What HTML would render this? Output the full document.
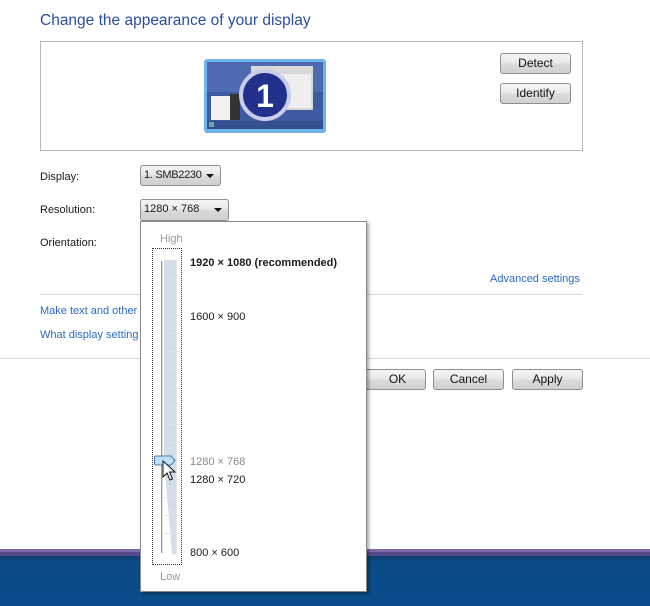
<!DOCTYPE html>
<html><head><style>
*{margin:0;padding:0;box-sizing:border-box}
body{width:650px;height:606px;overflow:hidden;background:#fff;font-family:"Liberation Sans",sans-serif;font-size:11px;color:#1a1a1a;position:relative}
.a{position:absolute;white-space:nowrap}
.lnk{color:#2a6bc4}
.btn{position:absolute;border:1px solid #8e8f8f;border-radius:3px;background:linear-gradient(#f6f6f6,#e8e8e8 50%,#dcdcdc 51%,#d0d0d0);text-align:center;font-size:12px;line-height:19px;color:#111}
.dd{position:absolute;border:1px solid #8e8f8f;border-radius:3px;background:linear-gradient(#f6f6f6,#e6e6e6 50%,#dadada 51%,#cfcfcf);font-size:11px;line-height:19px;padding-left:3px}
.dd:after{content:"";position:absolute;right:6px;top:8px;border:4px solid transparent;border-top:4px solid #111;border-bottom:0}
</style></head><body>
<div class="a" style="left:40px;top:12px;font-size:15.5px;color:#2a4ea0">Change the appearance of your display</div>
<div class="a" style="left:40px;top:41px;width:543px;height:110px;border:1px solid #b9b9b9"></div>
<svg class="a" style="left:203px;top:58px" width="124" height="76">
<rect x="1" y="1" width="122" height="74" rx="3" fill="#6fb4ea"/>
<rect x="4" y="4" width="116" height="67" fill="#3e5aa0"/>
<rect x="4" y="4" width="116" height="30" fill="#4e6ab0"/>
<rect x="4" y="63" width="116" height="8" fill="#35508f"/>
<rect x="6" y="64" width="5" height="5" fill="#6a9"/>
<rect x="48" y="8" width="62" height="44" fill="#d8d8d8"/>
<rect x="62" y="16" width="46" height="34" fill="#eee"/>
<rect x="8" y="38" width="20" height="24" fill="#f2f2f2"/>
<rect x="27" y="36" width="10" height="26" fill="#333"/>
<circle cx="62" cy="37" r="24" fill="#21308a" stroke="#c8cde8" stroke-width="4"/>
<text x="62" y="49" text-anchor="middle" font-family="Liberation Sans" font-weight="bold" font-size="32" fill="#fff">1</text>
</svg>
<div class="btn" style="left:500px;top:53px;width:71px;height:21px">Detect</div>
<div class="btn" style="left:500px;top:83px;width:71px;height:21px">Identify</div>
<div class="a" style="left:40px;top:171px">Display:</div>
<div class="dd" style="left:140px;top:165px;width:81px;height:21px;letter-spacing:-0.3px">1. SMB2230</div>
<div class="a" style="left:40px;top:204px">Resolution:</div>
<div class="dd" style="left:140px;top:199px;width:89px;height:22px">1280 × 768</div>
<div class="a" style="left:40px;top:237px">Orientation:</div>
<div class="a lnk" style="left:490px;top:273px">Advanced settings</div>
<div class="a" style="left:40px;top:294px;width:542px;height:1px;background:#d9d9d9"></div>
<div class="a lnk" style="left:40px;top:305px">Make text and other</div>
<div class="a lnk" style="left:40px;top:329px">What display setting</div>
<div class="a" style="left:0;top:358px;width:650px;height:1px;background:#d9d9d9"></div>
<div class="btn" style="left:355px;top:369px;width:71px;height:21px;padding-left:14px">OK</div>
<div class="btn" style="left:433px;top:369px;width:71px;height:21px">Cancel</div>
<div class="btn" style="left:512px;top:369px;width:71px;height:21px">Apply</div>
<div class="a" style="left:0;top:549px;width:650px;height:3px;background:#7a6aa8"></div>
<div class="a" style="left:0;top:552px;width:650px;height:4px;background:#574a8a"></div>
<div class="a" style="left:0;top:556px;width:650px;height:50px;background:linear-gradient(#0f3e70,#0b4b86 6px,#0a4d8a)"></div>
<div class="a" style="left:140px;top:221px;width:227px;height:371px;background:#fff;border:1px solid #8a8a8a;box-shadow:2px 2px 3px rgba(0,0,0,.35)"></div>
<div class="a" style="left:160px;top:233px;color:#999">High</div>
<div class="a" style="left:152px;top:248px;width:30px;height:317px;border:1px dotted #333"></div>
<div class="a" style="left:161px;top:261px;width:2px;height:292px;border-left:1px solid #999;border-right:1px solid #ddd"></div>
<svg class="a" style="left:164px;top:260px" width="16" height="295">
<polygon points="0,0 12,0 12,294 8,294 0,200" fill="#d3dee8"/>
<polygon points="0,200 0,294 8,294" fill="#fff"/>
<g stroke="#dde4ea" stroke-width="1">
<line x1="0" y1="18.5" x2="16" y2="18.5"/><line x1="0" y1="55.5" x2="16" y2="55.5"/><line x1="0" y1="73.5" x2="16" y2="73.5"/><line x1="0" y1="91.5" x2="16" y2="91.5"/><line x1="0" y1="109.5" x2="16" y2="109.5"/><line x1="0" y1="128.5" x2="16" y2="128.5"/><line x1="0" y1="146.5" x2="16" y2="146.5"/><line x1="0" y1="164.5" x2="16" y2="164.5"/><line x1="0" y1="182.5" x2="16" y2="182.5"/><line x1="0" y1="219.5" x2="16" y2="219.5"/><line x1="0" y1="237.5" x2="16" y2="237.5"/><line x1="0" y1="255.5" x2="16" y2="255.5"/><line x1="0" y1="273.5" x2="16" y2="273.5"/>
</g>
<line x1="12.5" y1="0" x2="12.5" y2="294" stroke="#e8e8e8"/>
</svg>
<svg class="a" style="left:153px;top:455px" width="30" height="28">
<path d="M1.5,2.5 Q1.5,1 3,1 H18 L22,5.5 L18,10 H3 Q1.5,10 1.5,8.5 Z" fill="#bfe0f7" stroke="#4a7ca8"/>
<path d="M10,6 V22 L14,18 L17,25 L19.5,24 L16.5,17 L22,17 Z" fill="#fff" stroke="#111" stroke-width="1"/>
</svg>
<div class="a" style="left:190px;top:257px;font-weight:bold">1920 × 1080 (recommended)</div>
<div class="a" style="left:190px;top:311px">1600 × 900</div>
<div class="a" style="left:190px;top:456px;color:#8a8a8a">1280 × 768</div>
<div class="a" style="left:190px;top:474px">1280 × 720</div>
<div class="a" style="left:190px;top:547px">800 × 600</div>
<div class="a" style="left:160px;top:571px;color:#999">Low</div>
</body></html>
